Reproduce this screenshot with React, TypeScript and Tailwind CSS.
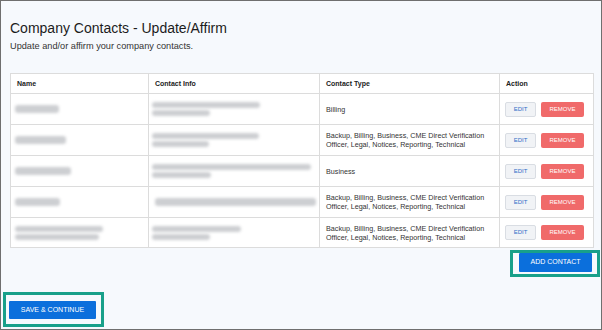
import React from 'react'

type Bar = { w: number; x?: number }
type Row = {
  name: Bar[]
  info: Bar[]
  type: string[]
}

const rows: Row[] = [
  { name: [{ w: 44 }], info: [{ w: 108 }, { w: 58 }], type: ['Billing'] },
  {
    name: [{ w: 51 }],
    info: [{ w: 107 }, { w: 57 }],
    type: ['Backup, Billing, Business, CME Direct Verification', 'Officer, Legal, Notices, Reporting, Technical'],
  },
  { name: [{ w: 56 }], info: [{ w: 159 }, { w: 59 }], type: ['Business'] },
  {
    name: [{ w: 45 }],
    info: [{ w: 161, x: 3 }],
    type: ['Backup, Billing, Business, CME Direct Verification', 'Officer, Legal, Notices, Reporting, Technical'],
  },
  {
    name: [{ w: 88 }, { w: 84 }],
    info: [{ w: 89 }, { w: 58 }],
    type: ['Backup, Billing, Business, CME Direct Verification', 'Officer, Legal, Notices, Reporting, Technical'],
  },
]

function Blur({ bars }: { bars: Bar[] }) {
  return (
    <div className="flex flex-col gap-[2px]">
      {bars.map((b, i) => (
        <div
          key={i}
          className={`${bars.length === 1 ? 'h-[8px]' : 'h-[6px]'} rounded-[3px] bg-[#cdcfd2] blur-[1.8px]`}
          style={{ width: b.w, marginLeft: b.x ?? 0 }}
        />
      ))}
    </div>
  )
}

export default function App() {
  return (
    <div
      className="relative flex h-[330px] w-[602px] flex-col overflow-hidden border border-[#6f6f6f] bg-[#f6f9fd] pl-[9px] pr-[8px] pt-[19px] text-[#222]"
      style={{ fontFamily: '"Liberation Sans", Arial, sans-serif' }}
    >
      <h1 className="text-[14px] leading-[17px] font-normal text-[#1c1c1c]">Company Contacts - Update/Affirm</h1>
      <p className="mt-[4px] text-[9.2px] leading-[11px] text-[#333]">Update and/or affirm your company contacts.</p>

      <table className="mt-[21px] w-[583px] table-fixed border-collapse bg-white text-[7.2px] leading-[9px] text-[#333]">
        <colgroup>
          <col className="w-[138px]" />
          <col className="w-[171px]" />
          <col className="w-[180px]" />
          <col className="w-[94px]" />
        </colgroup>
        <thead>
          <tr className="h-[20px]">
            {['Name', 'Contact Info', 'Contact Type', 'Action'].map((h) => (
              <th
                key={h}
                className="border border-[#dcdcdc] px-[6px] text-left align-middle text-[7px] font-bold text-[#222]"
              >
                {h}
              </th>
            ))}
          </tr>
        </thead>
        <tbody>
          {rows.map((r, i) => (
            <tr key={i} className={i === 4 ? 'h-[30px]' : 'h-[31px]'}>
              <td className="border border-[#dcdcdc] pl-[4px] align-middle">
                <Blur bars={r.name} />
              </td>
              <td className="border border-[#dcdcdc] pl-[3px] align-middle">
                <Blur bars={r.info} />
              </td>
              <td className="border border-[#dcdcdc] px-[6px] align-middle">
                {r.type.map((t, j) => (
                  <div key={j} className="whitespace-nowrap">
                    {t}
                  </div>
                ))}
              </td>
              <td className="border border-[#dcdcdc] pl-[5px] align-middle">
                <div className="flex items-center gap-[5px]">
                  <button className="flex h-[15px] w-[31px] items-center justify-center rounded-[2px] border border-[#d9dde3] bg-[#f1f3f6] text-[6px] text-[#2f6fc8]">
                    EDIT
                  </button>
                  <button className="flex h-[15px] w-[43px] items-center justify-center rounded-[2px] bg-[#f06a6a] text-[6px] text-white">
                    REMOVE
                  </button>
                </div>
              </td>
            </tr>
          ))}
        </tbody>
      </table>

      <div className="mr-[-7px] mt-[2px] flex justify-end">
        <div className="border-[3px] border-[#18a08a] pb-[2px] pl-[6px] pr-[5px]">
          <button className="flex h-[19px] w-[73px] items-center justify-center rounded-[1px] bg-[#0b6fdc] text-[7px] text-white">
            ADD CONTACT
          </button>
        </div>
      </div>

      <div className="ml-[-7px] mt-[15px] flex">
        <div className="border-[3px] border-[#18a08a] pb-[5px] pl-[3px] pr-[5px] pt-[6px]">
          <button className="flex h-[18px] w-[87px] items-center justify-center rounded-[1px] bg-[#0b6fdc] text-[7px] text-white">
            SAVE &amp; CONTINUE
          </button>
        </div>
      </div>
    </div>
  )
}
